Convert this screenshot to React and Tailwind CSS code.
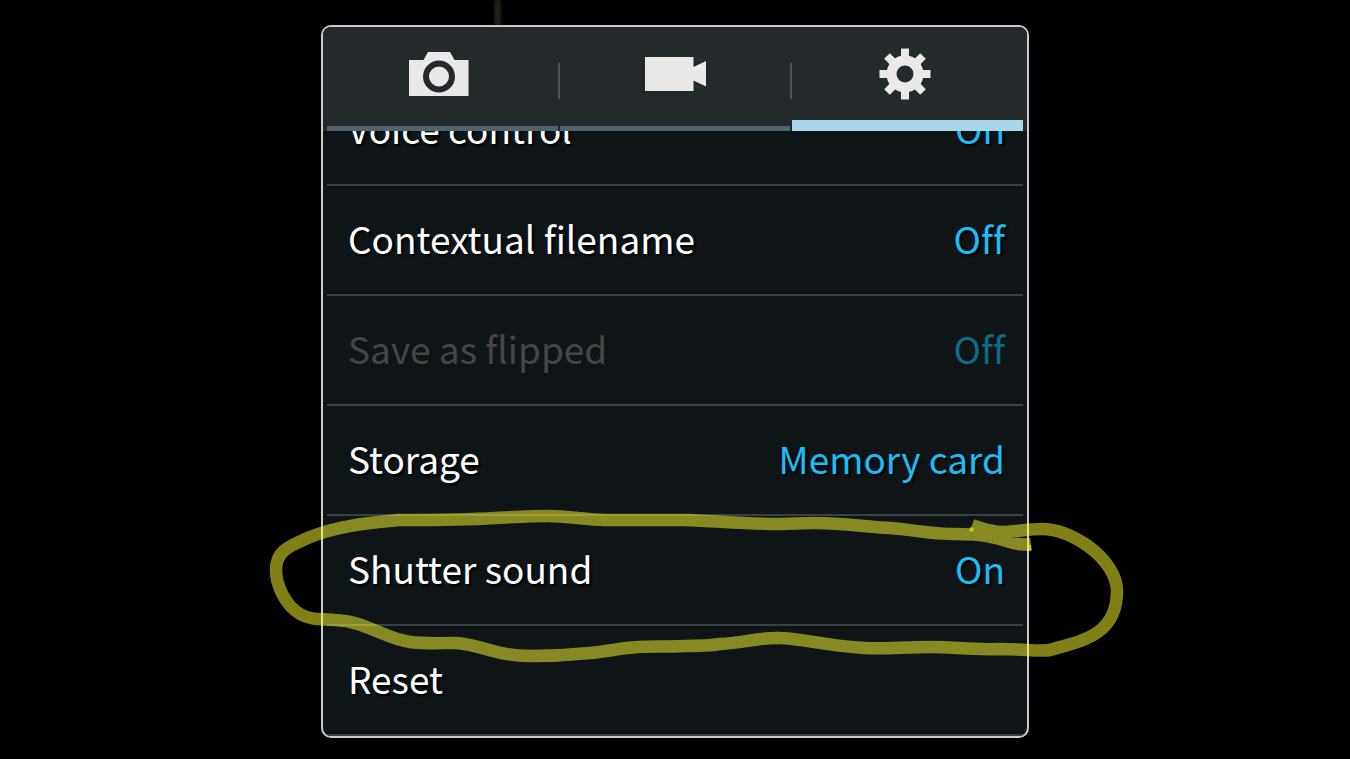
import React, { useState } from "react";

const CameraIcon = () => (
  <svg width="60" height="44" viewBox="0 0 60 44" fill="#e9e9e9" aria-hidden="true">
    <path d="M0 8h14.500l4.500-8h22l4.500 8H59.500v36H0z" />
    <circle cx="30" cy="24.500" r="13" fill="none" stroke="#242a2c" strokeWidth="6" />
  </svg>
);

const VideoIcon = () => (
  <svg width="62" height="34" viewBox="0 0 62 34" fill="#e9e9e9" aria-hidden="true">
    <path d="M1 0h48.500v10L62 4v25.500L49.500 23.500V34H1z" />
  </svg>
);

const GearIcon = () => (
  <svg width="52" height="52" viewBox="-26 -26 52 52" fill="#e9e9e9" aria-hidden="true">
    {[0, 45, 90, 135, 180, 225, 270, 315].map((angle) => (
      <rect key={angle} x="-4" y="-25.500" width="8" height="15" transform={`rotate(${angle})`} />
    ))}
    <circle r="13.500" fill="none" stroke="#e9e9e9" strokeWidth="10" />
  </svg>
);

const tabs = [
  { id: "camera", label: "Camera", icon: CameraIcon, spacing: "pr-1.5" },
  { id: "video", label: "Video", icon: VideoIcon, spacing: "" },
  { id: "general", label: "General", icon: GearIcon, spacing: "pr-1.5" },
];

const settings = [
  { label: "Voice control", value: "On" },
  { label: "Contextual filename", value: "Off" },
  { label: "Save as flipped", value: "Off", disabled: true },
  { label: "Storage", value: "Memory card" },
  { label: "Shutter sound", value: "On" },
  { label: "Reset" },
];

// Hand drawn loop around the shutter sound row
const loop = `M972 525C985 530 995 532 1005 532C1020 531 1030 529 1042 529
  C1060 529 1075 537 1088 546C1106 559 1117 576 1117 591
  C1117 606 1112 622 1098 632C1084 642 1066 645 1050 650
  C1040 652 1025 649 1000 649C970 650 955 647 930 647
  C905 647 885 649 865 648C825 646 800 638 780 638
  C760 637 745 643 720 644C708 646 695 646 685 646
  C665 647 650 646 638 647C620 648 605 652 590 653
  C570 655 550 656 530 656C495 656 480 644 455 643
  C440 643 425 644 410 642C385 639 365 621 335 620
  C320 619 310 620 300 614C285 605 276 585 276 570
  C276 550 290 546 310 537C340 525 370 523 400 520
  C430 520 465 520 495 518C515 517 530 516 548 516
  C570 516 585 520 605 520C630 520 660 520 685 520
  C715 521 745 524 775 524C790 524 800 523 815 523
  C845 523 865 527 890 528C915 530 930 534 955 534
  C985 534 998 538 1010 542C1018 545 1024 545 1031 544`;

const SettingRow = ({ label, value, disabled }) => (
  <li className="shrink-0 border-b-2 border-[#3b4042]">
    <button
      disabled={disabled}
      className="flex h-[108px] w-full items-center justify-between pr-[18px] pb-1 pl-[21px] text-[37px] leading-[48px]"
    >
      <span className={disabled ? "text-[#434748]" : "text-white [text-shadow:2px_2px_2px_#000]"}>
        {label}
      </span>
      {value && (
        <span className={disabled ? "text-[#106a88]" : "text-[#1cbdf5] [text-shadow:2px_2px_2px_#000]"}>
          {value}
        </span>
      )}
    </button>
  </li>
);

const App = () => {
  const [activeTab, setActiveTab] = useState("general");

  return (
    <main className="relative flex h-screen justify-center overflow-hidden bg-black pt-[25px] pb-[21px] font-['Noto_Sans_CJK_SC',sans-serif] [font-variant-ligatures:none]">
      {/* Preview behind the panel */}
      <div className="absolute top-0 left-1/2 -ml-[181px] h-[25px] w-[7px] bg-[#221d19] blur-[1px]" />

      {/* Settings panel */}
      <section className="relative flex w-full max-w-[708px] flex-col overflow-hidden rounded-[10px] border-2 border-[#c9cccc] bg-[#0f1517]">
        <div role="tablist" className="flex h-[104px] shrink-0 bg-[#242a2c] px-1">
          {tabs.map(({ id, label, icon: Icon, spacing }, idx) => (
            <React.Fragment key={id}>
              {idx > 0 && <div className="mt-9 h-9 w-[2px] bg-[#515657]" />}
              <button
                role="tab"
                aria-label={label}
                aria-selected={activeTab === id}
                onClick={() => setActiveTab(id)}
                className="flex flex-1 flex-col"
              >
                <span className={`flex h-[93px] w-full items-center justify-center ${spacing}`}>
                  <Icon />
                </span>
                <span
                  className={
                    activeTab === id
                      ? "mt-auto h-[11px] w-full bg-[#a8d7ec]"
                      : "mt-auto h-[5px] w-full bg-[#50646d]"
                  }
                />
              </button>
            </React.Fragment>
          ))}
        </div>

        {/* Scrolled to the end, so the first row is cut off */}
        <ul className="mx-1 flex min-h-0 flex-1 flex-col justify-end overflow-hidden">
          {settings.map((s) => (
            <SettingRow key={s.label} {...s} />
          ))}
        </ul>
      </section>

      {/* Marker */}
      <svg
        width="1350"
        height="759"
        viewBox="0 0 1350 759"
        className="pointer-events-none absolute top-0 left-1/2 -translate-x-1/2"
        aria-hidden="true"
      >
        <path d={loop} fill="none" stroke="#ffff2e" strokeOpacity="0.500" strokeWidth="12.500" />
        <path d="M970 527l4 1-1 4-4-1zM1028 545h3v6h-3z" fill="#ffff20" fillOpacity="0.500" />
      </svg>
    </main>
  );
};

export default App;
